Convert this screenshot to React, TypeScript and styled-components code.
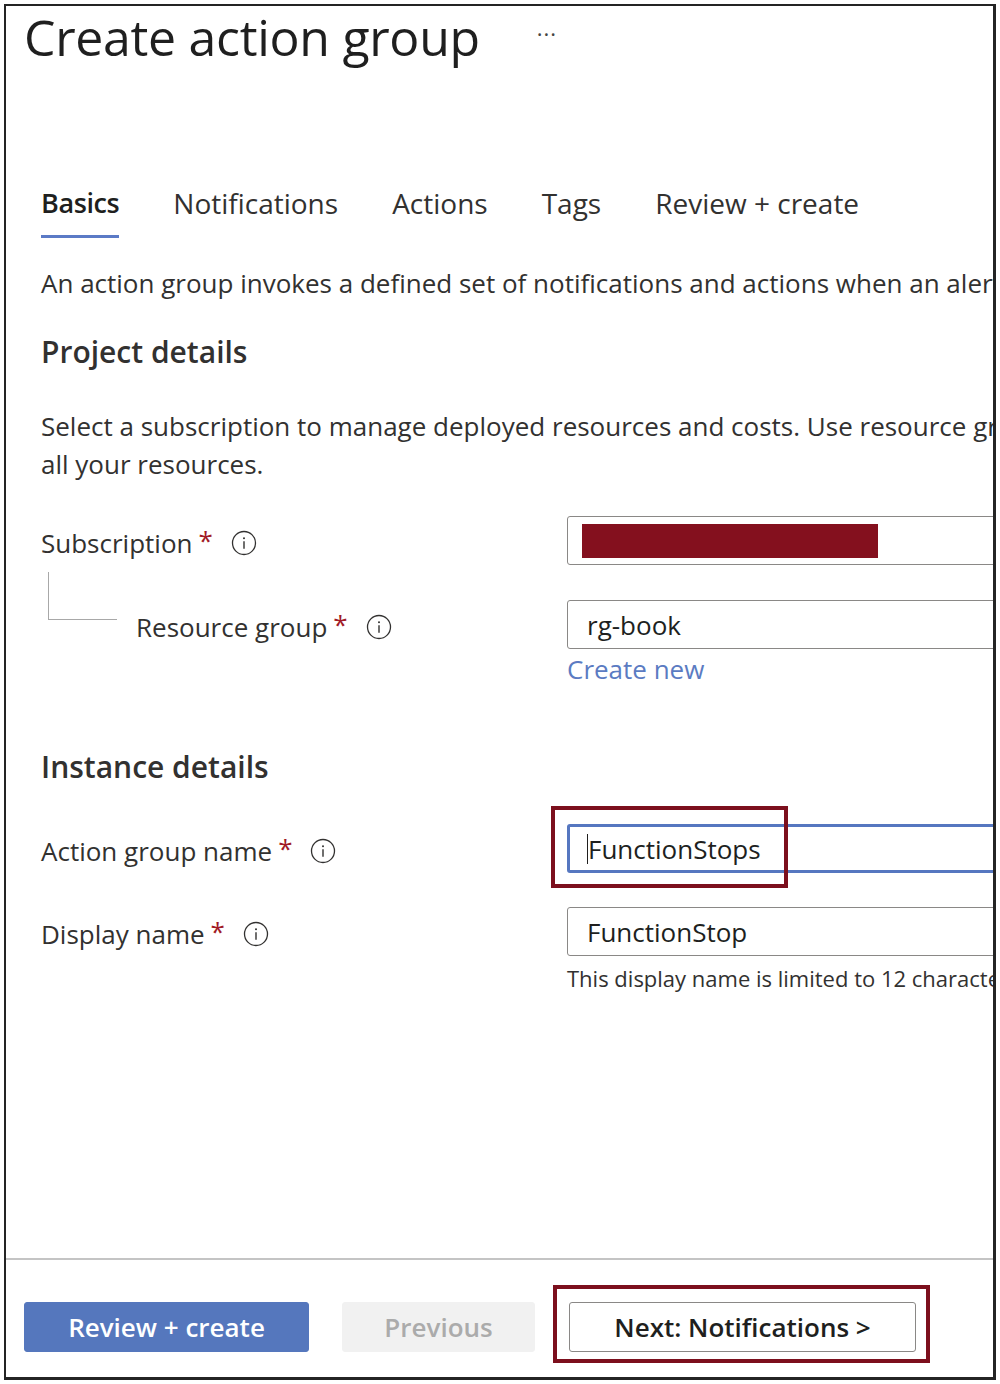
import React from "react";
import styled, { createGlobalStyle } from "styled-components";

const Global = createGlobalStyle`
  html, body { margin: 0; padding: 0; background: #ffffff; }
  body { font-family: "Open Sans", "Noto Sans", Arial, sans-serif; color: #323130; }
  * { box-sizing: border-box; }
`;

const Frame = styled.div`
  position: relative;
  margin: 4px 0 0 4px;
  width: 992px;
  height: 1376px;
  border-style: solid;
  border-color: #242424;
  border-width: 2px 3px 3px 2px;
  overflow: hidden;
  display: flex;
  flex-direction: column;
  background: #fff;
`;

const Header = styled.header`
  display: flex;
  align-items: center;
  gap: 57px;
  padding: 0 0 0 18px;
  height: 62px;
`;

const Title = styled.h1`
  margin: 0;
  font-size: 50px;
  font-weight: 400;
  color: #1f1f1f;
  letter-spacing: -0.3px;
  white-space: nowrap;
`;

const More = styled.span`
  font-size: 22px;
  color: #444;
  letter-spacing: 1px;
  margin-top: -8px;
`;

const Body = styled.main`
  flex: 1;
  padding: 112px 0 0 35px;
  display: flex;
  flex-direction: column;
`;

const Tabs = styled.nav`
  display: flex;
  gap: 54px;
  height: 66px;
`;

const Tab = styled.div<{ $active?: boolean }>`
  font-size: ${(p) => (p.$active ? 27 : 28)}px;
  white-space: nowrap;
  color: ${(p) => (p.$active ? "#201f1e" : "#323130")};
  font-weight: ${(p) => (p.$active ? 600 : 400)};
  letter-spacing: ${(p) => (p.$active ? "-0.4px" : "0")};
  line-height: 46px;
  border-bottom: 3px solid ${(p) => (p.$active ? "#5b7ac6" : "transparent")};
  align-self: flex-start;
  height: 58px;
`;

const Text = styled.p`
  margin: 0;
  font-size: 26px;
  line-height: 38px;
  white-space: nowrap;
  color: #323130;
`;

const Intro = styled(Text)`
  margin-top: 18px;
`;

const SectionTitle = styled.h2<{ $top: number }>`
  margin: ${(p) => p.$top}px 0 0 0;
  font-size: 30px;
  font-weight: 600;
  line-height: 40px;
  color: #323130;
  white-space: nowrap;
`;

const Paragraph = styled(Text)`
  margin-top: 35px;
`;

const Form = styled.div<{ $top: number }>`
  margin-top: ${(p) => p.$top}px;
  display: flex;
  flex-direction: column;
`;

const Row = styled.div<{ $top?: number }>`
  display: grid;
  grid-template-columns: 526px 640px;
  margin-top: ${(p) => p.$top ?? 0}px;
`;

const LabelCell = styled.div`
  display: flex;
  align-items: center;
  height: 50px;
  padding-top: 3px;
  font-size: 26px;
  color: #323130;
  white-space: nowrap;
`;

const Connector = styled.span`
  align-self: flex-start;
  width: 69px;
  height: 48px;
  margin: -31px 19px 0 7px;
  border-left: 1px solid #a8a8a8;
  border-bottom: 1px solid #a8a8a8;
  flex: none;
`;

const Required = styled.span`
  color: #a11a26;
  margin-left: 6px;
  font-size: 26px;
  position: relative;
  top: -3px;
`;

const InfoWrap = styled.span`
  display: inline-flex;
  margin-left: 18px;
`;

const FieldCell = styled.div`
  display: flex;
  flex-direction: column;
`;

const InputBox = styled.div<{ $focused?: boolean }>`
  position: relative;
  height: 49px;
  border: ${(p) => (p.$focused ? "3px solid #5677c0" : "1px solid #8a8886")};
  border-radius: 3px;
  display: flex;
  align-items: center;
  padding-left: ${(p) => (p.$focused ? 17 : 19)}px;
  font-size: 26px;
  color: #201f1e;
  white-space: nowrap;
`;

const Redacted = styled.span`
  width: 296px;
  height: 34px;
  background: #84101e;
  margin-left: -5px;
  margin-top: 1px;
`;

const Caret = styled.span`
  display: inline-block;
  width: 1px;
  height: 30px;
  background: #201f1e;
`;

const Link = styled.a`
  font-size: 26px;
  color: #5b7bc2;
  text-decoration: none;
  line-height: 40px;
`;

const Helper = styled.div`
  font-size: 22px;
  color: #323130;
  line-height: 44px;
  white-space: nowrap;
`;

const Highlight = styled.span<{ $l: number; $t: number; $w: number; $h: number }>`
  position: absolute;
  left: ${(p) => p.$l}px;
  top: ${(p) => p.$t}px;
  width: ${(p) => p.$w}px;
  height: ${(p) => p.$h}px;
  border: 4px solid #7c0f1d;
  pointer-events: none;
`;

const Divider = styled.hr`
  margin: 0;
  border: none;
  border-top: 2px solid #c4c4c4;
`;

const Footer = styled.footer`
  display: flex;
  align-items: flex-start;
  padding: 42px 0 0 18px;
  height: 117px;
  gap: 33px;
`;

const Button = styled.button<{ $variant: "primary" | "disabled" | "default" }>`
  position: relative;
  height: 50px;
  font-family: "Open Sans", "Noto Sans", Arial, sans-serif;
  font-size: 26px;
  font-weight: 600;
  border-radius: 3px;
  padding: 0;
  cursor: pointer;
  white-space: nowrap;
  ${(p) =>
    p.$variant === "primary"
      ? `background:#5577bd;color:#fff;border:1px solid #5577bd;width:285px;`
      : p.$variant === "disabled"
      ? `background:#f1f1f1;color:#ababab;border:1px solid #f1f1f1;width:193px;`
      : `background:#fff;color:#201f1e;border:1px solid #8a8886;width:347px;margin-left:1px;`}
`;

const InfoIcon = () => (
  <svg width="26" height="26" viewBox="0 0 26 26" fill="none">
    <circle cx="13" cy="13" r="11.5" stroke="#323130" strokeWidth="1.3" />
    <circle cx="13" cy="8.2" r="1" fill="#323130" />
    <path d="M13 11.2v7.6" stroke="#323130" strokeWidth="1.4" />
  </svg>
);

const Label: React.FC<{ text: string; sub?: boolean }> = ({ text, sub }) => (
  <LabelCell>
    {sub && <Connector />}
    {text}
    <Required>*</Required>
    <InfoWrap>
      <InfoIcon />
    </InfoWrap>
  </LabelCell>
);

export default function App() {
  return (
    <>
      <Global />
      <Frame>
        <Header>
          <Title>Create action group</Title>
          <More>···</More>
        </Header>
        <Body>
          <Tabs>
            <Tab $active>Basics</Tab>
            <Tab>Notifications</Tab>
            <Tab>Actions</Tab>
            <Tab>Tags</Tab>
            <Tab>Review + create</Tab>
          </Tabs>
          <Intro>
            An action group invokes a defined set of notifications and actions when an alert is triggered.
          </Intro>
          <SectionTitle $top={30}>Project details</SectionTitle>
          <Paragraph>
            Select a subscription to manage deployed resources and costs. Use resource groups like folders to organize and manage
            <br />
            all your resources.
          </Paragraph>
          <Form $top={33}>
            <Row>
              <Label text="Subscription" />
              <FieldCell>
                <InputBox>
                  <Redacted />
                </InputBox>
              </FieldCell>
            </Row>
            <Row $top={34}>
              <Label text="Resource group" sub />
              <FieldCell>
                <InputBox>rg-book</InputBox>
                <Link href="#">Create new</Link>
              </FieldCell>
            </Row>
          </Form>
          <SectionTitle $top={58}>Instance details</SectionTitle>
          <Form $top={37}>
            <Row>
              <Label text="Action group name" />
              <FieldCell>
                <InputBox $focused>
                  <Caret />
                  FunctionStops
                  <Highlight $l={-19} $t={-21} $w={237} $h={82} />
                </InputBox>
              </FieldCell>
            </Row>
            <Row $top={33}>
              <Label text="Display name" />
              <FieldCell>
                <InputBox>FunctionStop</InputBox>
                <Helper>This display name is limited to 12 characters.</Helper>
              </FieldCell>
            </Row>
          </Form>
        </Body>
        <Divider />
        <Footer>
          <Button $variant="primary">Review + create</Button>
          <Button $variant="disabled">Previous</Button>
          <Button $variant="default">
            Next: Notifications &gt;
            <Highlight $l={-17} $t={-18} $w={377} $h={78} />
          </Button>
        </Footer>
      </Frame>
    </>
  );
}
